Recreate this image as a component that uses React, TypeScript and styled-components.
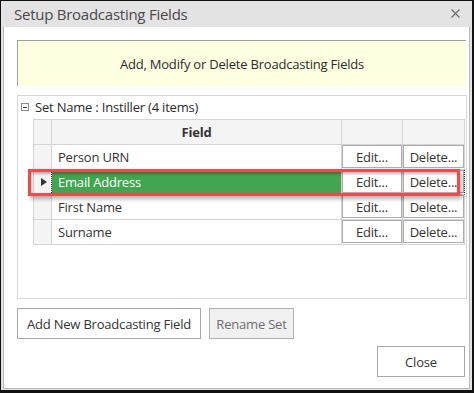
import React from "react";
import styled, { createGlobalStyle } from "styled-components";

const Global = createGlobalStyle`
  html, body { margin: 0; padding: 0; background: #fff; }
  body { font-family: "Open Sans", "Noto Sans", sans-serif; }
  * { box-sizing: border-box; }
`;

const Window = styled.div`
  width: 474px;
  height: 393px;
  border-style: solid;
  border-color: #111;
  border-width: 1px 2px 3px 1px;
  background: #e3e3e3;
  padding: 0 2px 1px 2px;
  display: flex;
  flex-direction: column;
`;

const TitleBar = styled.div`
  height: 26px;
  flex: none;
  display: flex;
  align-items: center;
  justify-content: space-between;
  padding: 0 10px 1px 11px;
  color: #4a4a4a;
  font-size: 15px;
  letter-spacing: -0.25px;
`;

const CloseX = styled.svg`
  width: 9px;
  height: 9px;
  display: block;
`;

const Content = styled.div`
  flex: 1;
  background: #fff;
  border: 1px solid #b8b8b8;
  border-top: none;
  padding: 13px 2px 0 13px;
  display: flex;
  flex-direction: column;
  font-size: 13px;
  color: #2b2b2b;
  letter-spacing: -0.2px;
`;

const Banner = styled.div`
  height: 46px;
  margin-right: 1px;
  background: #fefee1;
  border-top: 1px solid #a0a0a0;
  border-left: 1px solid #a0a0a0;
  display: flex;
  align-items: center;
  justify-content: center;
  padding-top: 1px;
`;

const Group = styled.div`
  margin-top: 9px;
  height: 204px;
  border: 1px solid #d7d7d7;
  padding: 2px 1px 0 15px;
  display: flex;
  flex-direction: column;
`;

const GroupHeader = styled.div`
  height: 21px;
  display: flex;
  align-items: flex-start;
  margin-left: -12px;
  gap: 6px;
  line-height: 18px;
`;

const Toggle = styled.span`
  width: 8px;
  height: 8px;
  margin-top: 5px;
  border: 1px solid #8a8a8a;
  position: relative;
  flex: none;
  &::after {
    content: "";
    position: absolute;
    left: 1px;
    right: 1px;
    top: 2.5px;
    height: 1px;
    background: #333;
  }
`;

const GridWrap = styled.div`
  position: relative;
  width: 432px;
`;

const Grid = styled.div`
  display: grid;
  grid-template-columns: 18px 290px 61px 62px;
  grid-auto-rows: 25px;
  border-top: 1px solid #d4d4d4;
  border-left: 1px solid #d4d4d4;
`;

const Cell = styled.div<{ $header?: boolean; $selector?: boolean; $selected?: boolean }>`
  border-right: 1px ${(p) => (p.$selector && p.$selected ? "dotted #222" : "solid #d4d4d4")};
  border-bottom: 1px solid #d4d4d4;
  background: ${(p) =>
    p.$selected && !p.$selector ? "#43a451" : p.$header || p.$selector ? "#f4f4f4" : "#fff"};
  color: ${(p) => (p.$selected ? "#fff" : "#333")};
  display: flex;
  align-items: center;
  justify-content: ${(p) => (p.$header || p.$selector ? "center" : "flex-start")};
  font-weight: ${(p) => (p.$header ? 700 : 400)};
  padding-left: ${(p) => (p.$header || p.$selector ? 0 : 6)}px;
`;

const ButtonCell = styled.div<{ $focus?: boolean }>`
  border-right: 1px ${(p) => (p.$focus ? "dotted #222" : "solid #d4d4d4")};
  border-bottom: 1px solid #d4d4d4;
  padding: 0 0 1px 0;
  display: flex;
`;

const CellButton = styled.button`
  flex: 1;
  margin: 0;
  padding: 0;
  border: 1px solid #adadad;
  background: #fff;
  font: inherit;
  color: #333;
  letter-spacing: -0.2px;
`;

const Arrow = styled.span`
  width: 0;
  height: 0;
  border-top: 4.5px solid transparent;
  border-bottom: 4.5px solid transparent;
  border-left: 6px solid #333;
  margin-left: 2px;
`;

const Highlight = styled.div`
  position: absolute;
  left: -5px;
  top: 50px;
  width: 432px;
  height: 27px;
  border: 3px solid #f24a4a;
  box-shadow: 2px 3px 4px rgba(0, 0, 0, 0.3), inset 1px 2px 3px rgba(0, 0, 0, 0.28);
  pointer-events: none;
`;

const ButtonRow = styled.div`
  margin-top: 9px;
  display: flex;
  gap: 8px;
`;

const DialogButton = styled.button<{ $disabled?: boolean; $w: number }>`
  height: 31px;
  width: ${(p) => p.$w}px;
  border: 1px solid ${(p) => (p.$disabled ? "#b0b0b0" : "#a8a8a8")};
  background: ${(p) => (p.$disabled ? "#f0f0f0" : "#fff")};
  color: ${(p) => (p.$disabled ? "#6e6e6e" : "#333")};
  font: inherit;
  letter-spacing: -0.2px;
  padding: 0;
  margin: 0;
`;

const Footer = styled.div`
  margin-top: 7px;
  display: flex;
  justify-content: flex-end;
  padding-right: 2px;
`;

const rows = ["Person URN", "Email Address", "First Name", "Surname"];

export default function App() {
  return (
    <>
      <Global />
      <Window>
        <TitleBar>
          <span>Setup Broadcasting Fields</span>
          <CloseX viewBox="0 0 9 9">
            <path d="M0.5 0.5 L8.5 8.5 M8.5 0.5 L0.5 8.5" stroke="#6a6a6a" strokeWidth="1.1" />
          </CloseX>
        </TitleBar>
        <Content>
          <Banner>Add, Modify or Delete Broadcasting Fields</Banner>
          <Group>
            <GroupHeader>
              <Toggle />
              <span>Set Name : Instiller (4 items)</span>
            </GroupHeader>
            <GridWrap>
              <Grid>
                <Cell $header />
                <Cell $header>Field</Cell>
                <Cell $header />
                <Cell $header />
                {rows.map((r, i) => (
                  <React.Fragment key={r}>
                    <Cell $selector $selected={i === 1}>{i === 1 && <Arrow />}</Cell>
                    <Cell $selected={i === 1}>{r}</Cell>
                    <ButtonCell>
                      <CellButton>Edit...</CellButton>
                    </ButtonCell>
                    <ButtonCell $focus={i === 1}>
                      <CellButton>Delete...</CellButton>
                    </ButtonCell>
                  </React.Fragment>
                ))}
              </Grid>
              <Highlight />
            </GridWrap>
          </Group>
          <ButtonRow>
            <DialogButton $w={184}>Add New Broadcasting Field</DialogButton>
            <DialogButton $w={85} $disabled>
              Rename Set
            </DialogButton>
          </ButtonRow>
          <Footer>
            <DialogButton $w={88}>Close</DialogButton>
          </Footer>
        </Content>
      </Window>
    </>
  );
}
